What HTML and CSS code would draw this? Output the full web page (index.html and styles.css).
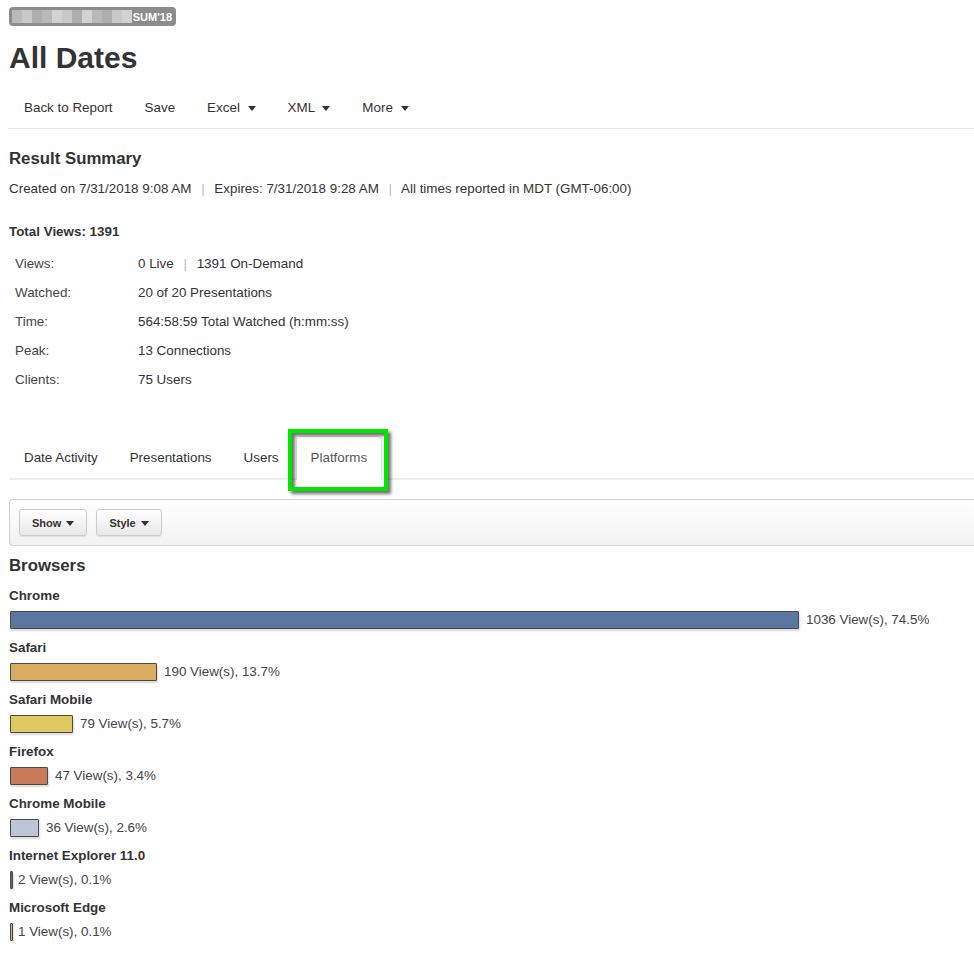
FILE: index.html
```html
<!DOCTYPE html>
<html lang="en">
<head>
  <meta charset="UTF-8">
  <title>All Dates</title>
  <link rel="stylesheet" href="styles.css">
</head>
<body>
  <div class="crumb">
    <span class="crumb-blur" aria-hidden="true">
      <i class="px p1"></i><i class="px p2"></i><i class="px p3"></i><i class="px p1"></i><i class="px p4"></i><i class="px p2"></i><i class="px p3"></i><i class="px p4"></i><i class="px p1"></i><i class="px p3"></i><i class="px p2"></i><i class="px p4"></i>
    </span>
    <span class="crumb-term">SUM'18</span>
  </div>

  <h1>All Dates</h1>

  <div class="nav">
    <a class="nav-item">Back to Report</a>
    <a class="nav-item">Save</a>
    <a class="nav-item">Excel <span class="caret"></span></a>
    <a class="nav-item">XML <span class="caret"></span></a>
    <a class="nav-item">More <span class="caret"></span></a>
  </div>

  <!-- Result summary -->
  <h2 class="section-title">Result Summary</h2>
  <p class="meta">
    Created on 7/31/2018 9:08 AM <span class="sep">|</span> Expires: 7/31/2018 9:28 AM <span class="sep">|</span> All times reported in MDT (GMT-06:00)
  </p>

  <div class="total">Total Views: 1391</div>
  <div class="stats">
    <div class="stat-row"><span class="stat-label">Views:</span><span>0 Live <span class="sep">|</span> 1391 On-Demand</span></div>
    <div class="stat-row"><span class="stat-label">Watched:</span><span>20 of 20 Presentations</span></div>
    <div class="stat-row"><span class="stat-label">Time:</span><span>564:58:59 Total Watched (h:mm:ss)</span></div>
    <div class="stat-row"><span class="stat-label">Peak:</span><span>13 Connections</span></div>
    <div class="stat-row"><span class="stat-label">Clients:</span><span>75 Users</span></div>
  </div>

  <!-- Tabs -->
  <div class="tab-container">
    <div class="tab">Date Activity</div>
    <div class="tab">Presentations</div>
    <div class="tab">Users</div>
    <div class="tab active">Platforms</div>
  </div>

  <div class="toolbar">
    <button class="tool-btn">Show <span class="caret"></span></button>
    <button class="tool-btn">Style <span class="caret"></span></button>
  </div>

  <h2 class="section-title browsers">Browsers</h2>

  <div class="chart">
    <div class="chart-item">
      <div class="chart-label">Chrome</div>
      <div class="chart-row"><span class="bar chrome" style="width: 789px"></span><span class="bar-value">1036 View(s), 74.5%</span></div>
    </div>
    <div class="chart-item">
      <div class="chart-label">Safari</div>
      <div class="chart-row"><span class="bar safari" style="width: 147px"></span><span class="bar-value">190 View(s), 13.7%</span></div>
    </div>
    <div class="chart-item">
      <div class="chart-label">Safari Mobile</div>
      <div class="chart-row"><span class="bar safari-mobile" style="width: 63px"></span><span class="bar-value">79 View(s), 5.7%</span></div>
    </div>
    <div class="chart-item">
      <div class="chart-label">Firefox</div>
      <div class="chart-row"><span class="bar firefox" style="width: 38px"></span><span class="bar-value">47 View(s), 3.4%</span></div>
    </div>
    <div class="chart-item">
      <div class="chart-label">Chrome Mobile</div>
      <div class="chart-row"><span class="bar chrome-mobile" style="width: 29px"></span><span class="bar-value">36 View(s), 2.6%</span></div>
    </div>
    <div class="chart-item">
      <div class="chart-label">Internet Explorer 11.0</div>
      <div class="chart-row"><span class="bar ie" style="width: 3px"></span><span class="bar-value tight">2 View(s), 0.1%</span></div>
    </div>
    <div class="chart-item">
      <div class="chart-label">Microsoft Edge</div>
      <div class="chart-row"><span class="bar edge" style="width: 3px"></span><span class="bar-value tight">1 View(s), 0.1%</span></div>
    </div>
  </div>
</body>
</html>
```

FILE: styles.css
```css
body {
  font-family: 'Liberation Sans', Arial, sans-serif;
  color: #333;
  margin: 0;
  padding: 7px 0 0 9px;
  font-size: 13.4px;
}

.crumb {
  display: inline-flex;
  align-items: center;
  height: 19px;
  width: 167px;
  box-sizing: border-box;
  padding: 0 4px 0 3px;
  background-color: #8c8c8c;
  border-radius: 4px;
}

.crumb-blur {
  display: flex;
  height: 13px;
}

.px {
  display: block;
  width: 10px;
  height: 13px;
}

.p1 { background-color: #b9b9b9; }
.p2 { background-color: #c9c9c9; }
.p3 { background-color: #aeaeae; }
.p4 { background-color: #d2d2d2; }

.crumb-term {
  margin-left: auto;
  color: white;
  font-size: 11px;
  font-weight: bold;
}

h1 {
  font-size: 30px;
  line-height: 36px;
  margin: 14px 0 12px;
  color: #333;
}

.nav {
  display: flex;
  margin-left: -1px;
  border-bottom: 1px solid #e5e5e5;
}

.nav-item {
  padding: 10px 16px;
  line-height: 20px;
  color: #333;
}

.caret {
  display: inline-block;
  width: 0;
  height: 0;
  margin-left: 4px;
  vertical-align: middle;
  border-top: 5px solid #333;
  border-left: 4px solid transparent;
  border-right: 4px solid transparent;
}

.section-title {
  font-size: 16.8px;
  line-height: 22px;
  margin: 19px 0 9px;
  color: #333;
}

.meta {
  margin: 0;
  line-height: 20px;
  color: #333;
}

.sep {
  color: #bbb;
  margin: 0 6px;
}

.total {
  margin-top: 24px;
  font-size: 13.4px;
  font-weight: bold;
  line-height: 18px;
}

.stats {
  margin: 8px 0 0 6px;
}

.stat-row {
  display: flex;
  line-height: 29px;
}

.stat-label {
  width: 123px;
  color: #444;
}

.tab-container {
  display: flex;
  margin-top: 42px;
  border-bottom: 2px solid #eee;
}

.tab {
  padding: 11px 14px;
  line-height: 19px;
  margin-right: 2px;
  border: 1px solid transparent;
  border-bottom: none;
  border-radius: 4px 4px 0 0;
  color: #333;
}

.tab.active {
  position: relative;
  background-color: white;
  border-color: #ddd;
  color: #555;
  margin-bottom: -2px;
  padding-bottom: 13px;
}

/* highlight box drawn over the selected tab */
.tab.active::after {
  content: '';
  position: absolute;
  top: -8px;
  left: -9px;
  right: -7px;
  bottom: -11px;
  border: 4px solid #00e600;
  box-shadow: 3px 3px 3px rgba(0, 0, 0, 0.55), inset 3px 3px 3px rgba(0, 0, 0, 0.55);
}

.toolbar {
  display: flex;
  gap: 9px;
  margin-top: 19px;
  padding: 9px 9px;
  border: 1px solid #d0d0d0;
  border-right: none;
  border-radius: 4px 0 0 4px;
  background: linear-gradient(#ffffff, #f2f2f2);
}

.tool-btn {
  font-family: inherit;
  font-size: 11px;
  font-weight: bold;
  color: #333;
  height: 27px;
  padding: 0 12px;
  border: 1px solid #ccc;
  border-radius: 3px;
  background: linear-gradient(#ffffff, #e8e8e8);
  box-shadow: 0 1px 1px rgba(0, 0, 0, 0.08);
}

.tool-btn .caret {
  margin-left: 2px;
}

.section-title.browsers {
  margin: 9px 0 10px;
}

.chart-item {
  margin-bottom: 10px;
}

.chart-label {
  font-weight: bold;
  line-height: 18px;
  margin-bottom: 6px;
}

.chart-row {
  display: flex;
  align-items: center;
  height: 18px;
}

.bar {
  display: block;
  height: 18px;
  margin-left: 1px;
  box-sizing: border-box;
  border: 1px solid #4a4a4a;
  border-radius: 1px;
  box-shadow: 1px 2px 2px rgba(0, 0, 0, 0.15);
}

.bar.chrome { background-color: #5b76a0; }
.bar.safari { background-color: #d9ae62; }
.bar.safari-mobile { background-color: #e1c961; }
.bar.firefox { background-color: #c97b57; }
.bar.chrome-mobile { background-color: #bcc7d5; }
.bar.ie { background-color: #6a6a6a; }
.bar.edge { background-color: #d4aa66; }

.bar-value {
  margin-left: 7px;
  line-height: 18px;
  color: #444;
}

.bar-value.tight {
  margin-left: 5px;
}
```
